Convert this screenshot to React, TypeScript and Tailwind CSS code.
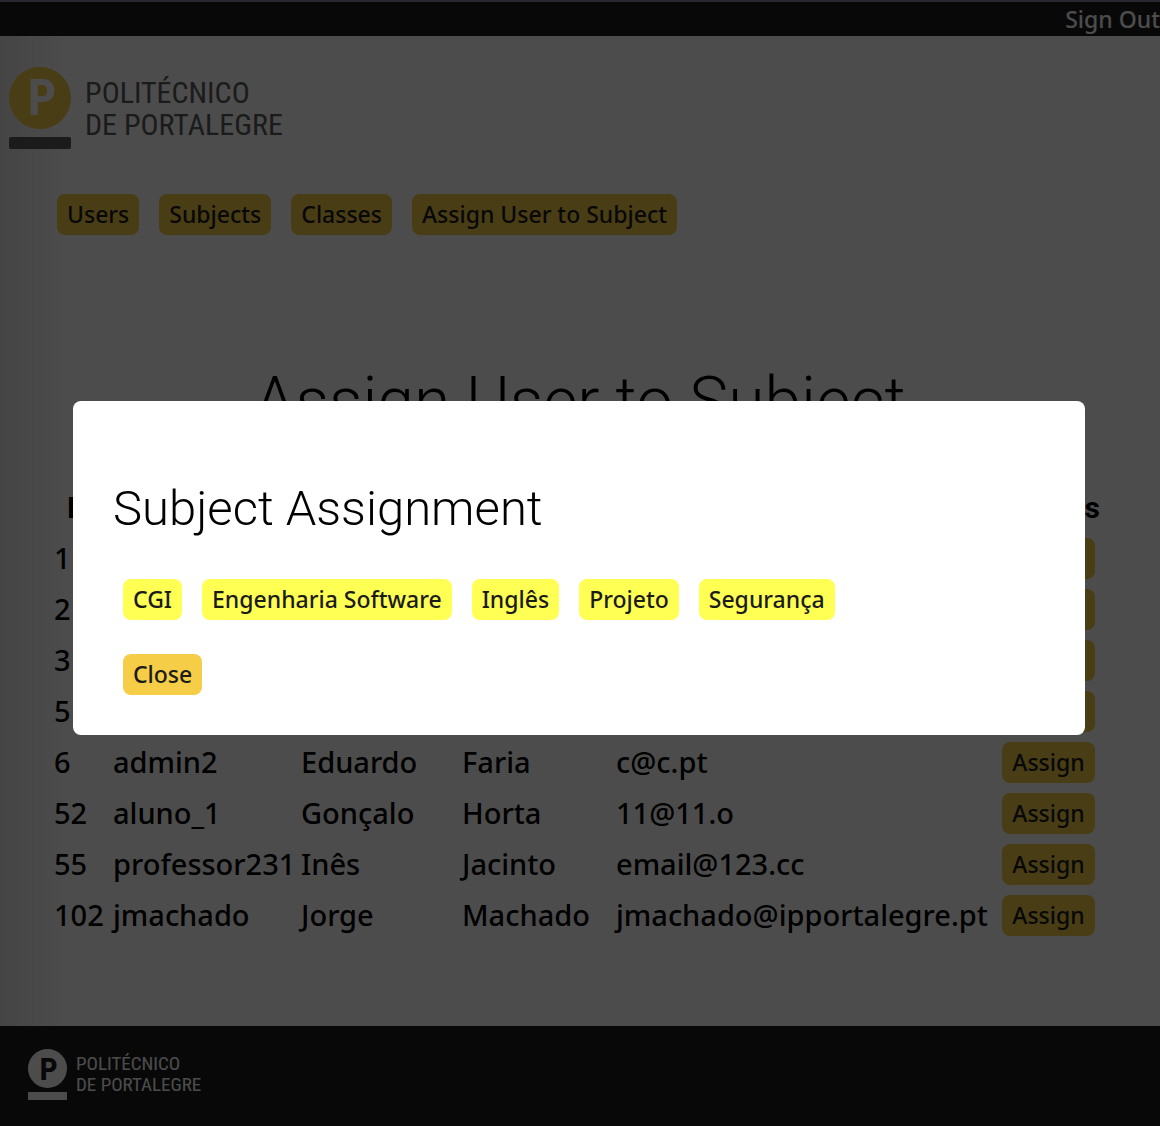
type User = { id: string; username: string; name: string; surname: string; email: string };

const navItems = ["Users", "Subjects", "Classes", "Assign User to Subject"];
const subjects = ["CGI", "Engenharia Software", "Inglês", "Projeto", "Segurança"];
const users: User[] = [
  { id: "1", username: "", name: "", surname: "", email: "" },
  { id: "2", username: "", name: "", surname: "", email: "" },
  { id: "3", username: "", name: "", surname: "", email: "" },
  { id: "5", username: "", name: "", surname: "", email: "" },
  { id: "6", username: "admin2", name: "Eduardo", surname: "Faria", email: "c@c.pt" },
  { id: "52", username: "aluno_1", name: "Gonçalo", surname: "Horta", email: "11@11.o" },
  { id: "55", username: "professor231", name: "Inês", surname: "Jacinto", email: "email@123.cc" },
  { id: "102", username: "jmachado", name: "Jorge", surname: "Machado", email: "jmachado@ipportalegre.pt" },
];

function Button({ label, bright = false }: { label: string; bright?: boolean }) {
  return (
    <button
      type="button"
      className={`h-[41px] shrink-0 cursor-pointer whitespace-nowrap rounded-lg px-[10px] text-[23px] leading-[41px] font-medium text-[#1b1b1b] ${
        bright ? "bg-[#ffff54]" : "bg-[#f5cd46]"
      }`}
    >
      {label}
    </button>
  );
}

function HeaderLogo() {
  return (
    <a href="#home" className="flex w-fit gap-[14px] text-[#5a5a5a]" aria-label="Politécnico de Portalegre">
      <span className="flex flex-col gap-2">
        <span className="flex size-[62px] items-center justify-center rounded-full bg-[#f5cd46] pl-1 font-['Roboto_Condensed'] text-[50px] leading-none font-bold text-white">
          P
        </span>
        <span className="h-3 rounded-xs bg-[#5a5a5a]" />
      </span>
      <span className="pt-[10px] font-['Roboto_Condensed'] text-[30px] leading-8">
        POLITÉCNICO
        <br />
        DE PORTALEGRE
      </span>
    </a>
  );
}

function FooterLogo() {
  return (
    <a href="#home" className="flex w-fit gap-[9px] text-white" aria-label="Politécnico de Portalegre">
      <span className="flex flex-col gap-1">
        <span className="flex size-[39px] items-center justify-center rounded-full bg-white pl-[2px] font-['Roboto_Condensed'] text-[32px] leading-none font-bold text-[#1b1b1b]">
          P
        </span>
        <span className="h-2 rounded-[1px] bg-white" />
      </span>
      <span className="pt-1 font-['Roboto_Condensed'] text-[19px] leading-[21px]">
        POLITÉCNICO
        <br />
        DE PORTALEGRE
      </span>
    </a>
  );
}

function UserTable() {
  return (
    <table className="w-full table-fixed text-left text-[29px] font-medium text-black">
      <colgroup>
        <col className="w-[59px]" />
        <col className="w-[188px]" />
        <col className="w-[161px]" />
        <col className="w-[154px]" />
        <col />
        <col className="w-[113px]" />
      </colgroup>
      <thead>
        <tr className="h-[51px] text-center font-['Roboto'] text-[30px] font-extrabold">
          <th scope="col" className="pr-2">Id</th>
          <th scope="col">Username</th>
          <th scope="col">Name</th>
          <th scope="col">Surname</th>
          <th scope="col">Email</th>
          <th scope="col">Actions</th>
        </tr>
      </thead>
      <tbody>
        {users.map((u) => (
          <tr key={u.id} className="h-[51px] leading-[41px] whitespace-nowrap">
            <td className="pb-[3px]">{u.id}</td>
            <td className="pb-[3px]">{u.username}</td>
            <td className="pb-[3px]">{u.name}</td>
            <td className="pb-[3px]">{u.surname}</td>
            <td className="pb-[3px]">{u.email}</td>
            <td>
              <div className="flex justify-center">
                <Button label="Assign" />
              </div>
            </td>
          </tr>
        ))}
      </tbody>
    </table>
  );
}

function SubjectDialog() {
  return (
    <div className="fixed inset-0 z-10 flex items-center bg-black/70 pt-[10px] pr-[75px] pl-[73px]">
      <div role="dialog" aria-modal="true" aria-labelledby="dialog-title" className="w-full rounded-lg bg-white px-10 pt-[78px] pb-10">
        <h2 id="dialog-title" className="font-['Roboto'] text-[49px] leading-[60px] font-light text-black">
          Subject Assignment
        </h2>
        <div className="mt-10 flex flex-wrap gap-5 px-[10px]">
          {subjects.map((s) => (
            <Button key={s} label={s} bright />
          ))}
        </div>
        <div className="mt-[34px] flex px-[10px]">
          <Button label="Close" />
        </div>
      </div>
    </div>
  );
}

export default function App() {
  return (
    <div className="flex min-h-screen flex-col overflow-x-hidden bg-white font-['Noto_Sans',sans-serif]">
      <header className="flex h-9 items-center justify-end border-t-2 border-[#8888a0] bg-[#1b1b1b]">
        <a href="#signout" className="text-[23px] leading-[34px] font-medium whitespace-nowrap text-white">
          Sign Out
        </a>
      </header>
      <main className="flex grow flex-col bg-[linear-gradient(to_right,#e6e6e6,#ffffff_70px)] pt-[31px] pb-[85px]">
        <div className="pl-[9px]">
          <HeaderLogo />
        </div>
        <nav className="mt-[45px] flex gap-5 pl-[57px]">
          {navItems.map((n) => (
            <Button key={n} label={n} />
          ))}
        </nav>
        <h1 className="mt-32 text-center font-['Roboto'] text-[66px] leading-[78px] font-light text-black">
          Assign User to Subject
        </h1>
        <div className="mt-[41px] pr-[55px] pl-[54px]">
          <UserTable />
        </div>
      </main>
      <footer className="h-[100px] bg-[#1b1b1b] pt-[23px] pl-7">
        <FooterLogo />
      </footer>
      <SubjectDialog />
    </div>
  );
}
